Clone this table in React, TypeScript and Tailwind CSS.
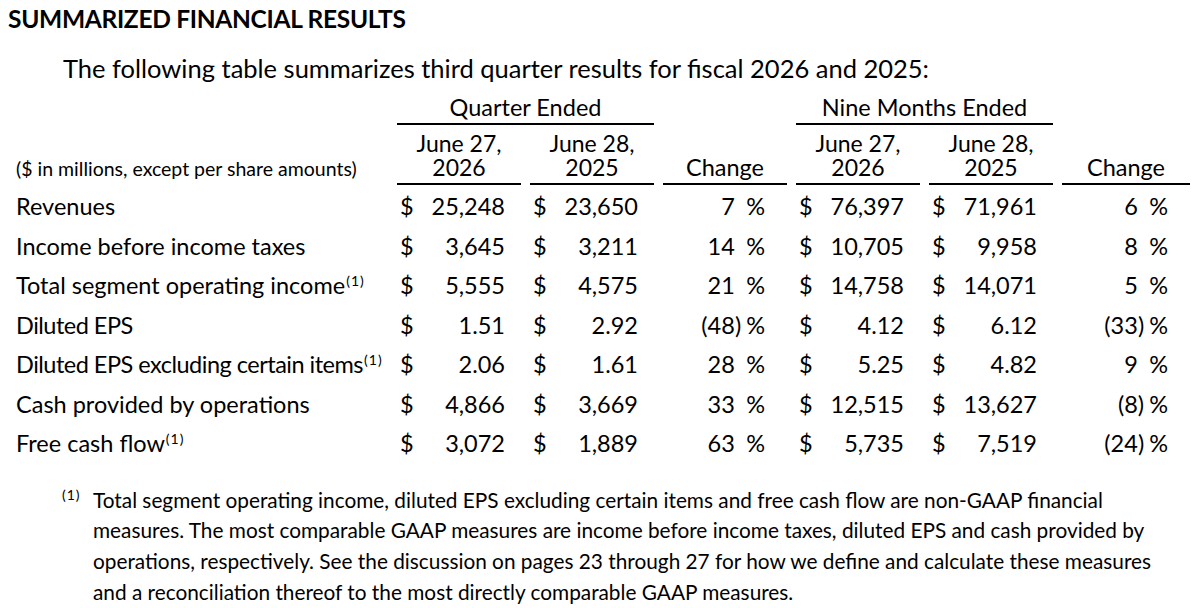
import React from "react";

type Row = {
  label: string;
  sup?: boolean;
  tight?: boolean;
  v: [string, string, string, string, string, string];
};

const rows: Row[] = [
  { label: "Revenues", v: ["25,248", "23,650", "7", "76,397", "71,961", "6"] },
  { label: "Income before income taxes", v: ["3,645", "3,211", "14", "10,705", "9,958", "8"] },
  { label: "Total segment operating income", sup: true, v: ["5,555", "4,575", "21", "14,758", "14,071", "5"] },
  { label: "Diluted EPS", tight: true, v: ["1.51", "2.92", "(48)", "4.12", "6.12", "(33)"] },
  { label: "Diluted EPS excluding certain items", sup: true, tight: true, v: ["2.06", "1.61", "28", "5.25", "4.82", "9"] },
  { label: "Cash provided by operations", v: ["4,866", "3,669", "33", "12,515", "13,627", "(8)"] },
  { label: "Free cash flow", sup: true, v: ["3,072", "1,889", "63", "5,735", "7,519", "(24)"] },
];

function Money({ value }: { value: string }) {
  return (
    <div className="flex h-[39.5px] items-center justify-between pl-[3px] pr-[16px] tabular-nums">
      <span>$</span>
      <span>{value}</span>
    </div>
  );
}

function Pct({ value }: { value: string }) {
  const neg = value.startsWith("(");
  return (
    <div className="flex h-[39.5px] items-center justify-end pr-[22px] tabular-nums">
      <span>{value}</span>
      {!neg && <span className="invisible">)</span>}
      <span className="ml-[5px]">%</span>
    </div>
  );
}

function DateHead({ a, b }: { a: string; b: string }) {
  return (
    <div className="flex h-full items-end justify-center border-b-2 border-black pb-[4px] text-center text-[23px] leading-[24px]">
      <span>
        {a}
        <br />
        {b}
      </span>
    </div>
  );
}

export default function App() {
  return (
    <div className="h-[608px] w-[1198px] overflow-hidden bg-white text-black font-['Lato',sans-serif]">
      <div className="pl-[8px] pt-[5px] text-[24.5px] font-bold leading-[28px] tracking-[-0.3px]">
        SUMMARIZED FINANCIAL RESULTS
      </div>
      <div className="pl-[63px] pt-[20px] text-[25.5px] leading-[30px]">
        The following table summarizes third quarter results for fiscal 2026 and 2025:
      </div>

      <div className="mt-[11px] grid grid-cols-[388px_124px_124px_124px_124px_124px_128px] gap-x-[9px] text-[23.5px]">
        {/* group header row */}
        <div />
        <div className="col-span-2 border-b-2 border-black pb-[3px] text-center leading-[26px]">
          Quarter Ended
        </div>
        <div />
        <div className="col-span-2 border-b-2 border-black pb-[3px] text-center leading-[26px]">
          Nine Months Ended
        </div>
        <div />

        {/* date header row */}
        <div className="flex items-end whitespace-nowrap pb-[4px] pl-[16px] text-[19.5px] leading-[24px]">
          ($ in millions, except per share amounts)
        </div>
        <div className="mt-[6px]">
          <DateHead a="June 27," b="2026" />
        </div>
        <div className="mt-[6px]">
          <DateHead a="June 28," b="2025" />
        </div>
        <div className="mt-[6px] flex items-end justify-center border-b-2 border-black pb-[4px] leading-[24px]">
          Change
        </div>
        <div className="mt-[6px]">
          <DateHead a="June 27," b="2026" />
        </div>
        <div className="mt-[6px]">
          <DateHead a="June 28," b="2025" />
        </div>
        <div className="mt-[6px] flex items-end justify-center border-b-2 border-black pb-[4px] leading-[24px]">
          Change
        </div>

        {/* spacer */}
        <div className="col-span-7 h-[2px]" />

        {rows.map((r) => (
          <React.Fragment key={r.label}>
            <div className="flex h-[39.5px] items-center whitespace-nowrap pl-[16px]">
              <span className={r.tight ? "tracking-[-0.5px]" : ""}>
                {r.label}
                {r.sup && (
                  <span className="relative -top-[8px] ml-[1px] text-[14px] tracking-[1px]">(1)</span>
                )}
              </span>
            </div>
            <Money value={r.v[0]} />
            <Money value={r.v[1]} />
            <Pct value={r.v[2]} />
            <Money value={r.v[3]} />
            <Money value={r.v[4]} />
            <Pct value={r.v[5]} />
          </React.Fragment>
        ))}
      </div>

      <div className="mt-[21px] flex pl-[62px] text-[20.8px] leading-[30.7px]">
        <div className="w-[31px] shrink-0">
          <span className="relative -top-[8px] text-[14px] tracking-[1px]">(1)</span>
        </div>
        <div className="w-[1100px] whitespace-nowrap">
          Total segment operating income, diluted EPS excluding certain items and free cash flow are non-GAAP financial
          <br />
          measures. The most comparable GAAP measures are income before income taxes, diluted EPS and cash provided by
          <br />
          operations, respectively. See the discussion on pages 23 through 27 for how we define and calculate these measures
          <br />
          and a reconciliation thereof to the most directly comparable GAAP measures.
        </div>
      </div>
    </div>
  );
}
